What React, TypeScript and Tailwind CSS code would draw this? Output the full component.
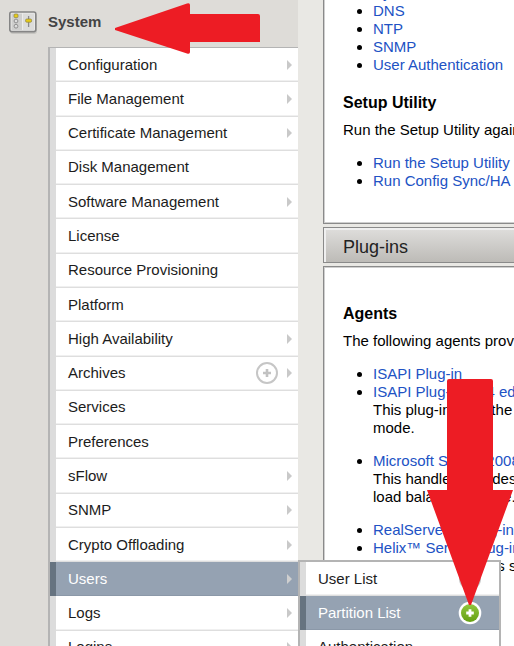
import type { ReactNode } from "react";

type Item = { label: string; arrow?: boolean; add?: boolean; active?: boolean };

const menu: Item[] = [
  { label: "Configuration", arrow: true },
  { label: "File Management", arrow: true },
  { label: "Certificate Management", arrow: true },
  { label: "Disk Management" },
  { label: "Software Management", arrow: true },
  { label: "License" },
  { label: "Resource Provisioning" },
  { label: "Platform" },
  { label: "High Availability", arrow: true },
  { label: "Archives", arrow: true, add: true },
  { label: "Services" },
  { label: "Preferences" },
  { label: "sFlow", arrow: true },
  { label: "SNMP", arrow: true },
  { label: "Crypto Offloading", arrow: true },
  { label: "Users", arrow: true, active: true },
  { label: "Logs", arrow: true },
  { label: "Logins", arrow: true },
];

const submenu: Item[] = [
  { label: "User List", add: true },
  { label: "Partition List", add: true, active: true },
  { label: "Authentication" },
];

function AddButton({ label, active }: { label: string; active?: boolean }) {
  return (
    <button type="button" aria-label={`Add to ${label}`} className="size-6 shrink-0">
      <svg viewBox="0 0 24 24" className="size-6">
        <defs>
          <linearGradient id="green" x1="0" y1="0" x2="0" y2="1">
            <stop offset="0" stopColor="#91c63f" />
            <stop offset="1" stopColor="#65a010" />
          </linearGradient>
        </defs>
        {active ? (
          <>
            <circle cx="12" cy="12" r="11.3" fill="#fff" />
            <circle cx="12" cy="12" r="9" fill="url(#green)" />
            <path d="M12 8.2v7.6M8.2 12h7.6" stroke="#fff" strokeWidth="2.8" />
          </>
        ) : (
          <>
            <circle cx="12" cy="12" r="10" fill="#fff" stroke="#c6c6c6" strokeWidth="2" />
            <path d="M12 8v8M8 12h8" stroke="#c2c2c2" strokeWidth="2.6" />
          </>
        )}
      </svg>
    </button>
  );
}

function MenuRow({ item, nested }: { item: Item; nested?: boolean }) {
  const tone = item.active
    ? "border-l-[#667380] bg-[#95a2b2] text-white shadow-[inset_0_-1px_0_#8b98a8]"
    : "border-l-[#dcdcdc] bg-white text-[#1c1c1c] shadow-[inset_0_-1px_0_#dedede,inset_0_-2px_0_#f0f0f0]";
  return (
    <li className={`flex items-center border-l-6 pb-px pl-3 ${nested ? "pr-[17px]" : "pr-[6px]"} ${tone}`}>
      <a href="#" className="flex-1">{item.label}</a>
      {item.add && <AddButton label={item.label} active={item.active} />}
      {item.arrow && (
        <svg viewBox="0 0 5 10" className={`ml-2 h-[10px] w-[5px] ${item.active ? "text-[#cfcfcf]" : "text-[#c9c9c9]"}`}>
          <path d="M0 0L5 5L0 10Z" fill="currentColor" />
        </svg>
      )}
    </li>
  );
}

function SystemIcon() {
  return (
    <svg viewBox="0 0 30 24" className="h-6 w-[30px]">
      <rect x="2" y="3" width="27" height="21" rx="3" fill="#c6c5c1" />
      <rect x="1.8" y="2" width="26" height="19.6" rx="2" fill="#ececeb" stroke="#858585" strokeWidth="1.6" />
      <rect x="3.5" y="3.6" width="10.5" height="16.4" fill="#cfcfce" />
      <rect x="15" y="3.6" width="11.2" height="16.4" fill="#dcdcdb" />
      <rect x="6" y="4" width="4" height="3.6" rx="1" fill="#e6cc18" stroke="#8a8046" strokeWidth="0.7" />
      <circle cx="8" cy="11" r="1.9" fill="#ddd" stroke="#888" strokeWidth="0.9" />
      <circle cx="8" cy="16.2" r="1.9" fill="#ddd" stroke="#888" strokeWidth="0.9" />
      <path d="M20.6 6v11" stroke="#8a8a8a" strokeWidth="1.3" />
      <rect x="17.6" y="9" width="6" height="3.2" rx="1.2" fill="#e6cc18" stroke="#8a8046" strokeWidth="0.7" />
    </svg>
  );
}

function Link({ children }: { children: ReactNode }) {
  return <a href="#" className="text-[#2152c4]">{children}</a>;
}

const listStyle = "list-disc pl-[30px]";
const panel = "border border-r-0 border-[#8a8a8a] bg-white pl-[19px]";

export default function App() {
  return (
    <div className="relative flex h-screen overflow-hidden bg-[#e9e8e4] font-['Liberation_Sans',Arial,sans-serif] text-[15px] leading-[18px] text-black">
      <nav className="w-[298px] shrink-0 bg-[#dedcd8]">
        <h2 className="flex h-[47px] items-center gap-[10px] pb-[3px] pl-2 font-bold text-[#444]">
          <SystemIcon />
          System
        </h2>
        <ul className="ml-12 grid h-[618px] auto-rows-fr border-t border-l-2 border-[#b4b4b4]">
          {menu.map((item) => <MenuRow key={item.label} item={item} />)}
        </ul>
      </nav>

      <main className="ml-[25px] flex-1 whitespace-nowrap">
        <section className={`${panel} h-[224px] overflow-hidden border-t-0 shadow-[inset_1px_-1px_0_#cfcfcf]`}>
          <ul className={`${listStyle} -mt-4`}>
            <li><Link>System</Link></li>
            <li><Link>DNS</Link></li>
            <li><Link>NTP</Link></li>
            <li><Link>SNMP</Link></li>
            <li><Link>User Authentication</Link></li>
          </ul>
          <h3 className="mt-5 text-base leading-[18px] font-bold">Setup Utility</h3>
          <p className="mt-[9px]">Run the Setup Utility again</p>
          <ul className={`${listStyle} mt-[15px]`}>
            <li><Link>Run the Setup Utility</Link></li>
            <li><Link>Run Config Sync/HA</Link></li>
          </ul>
        </section>

        <h2 className="my-[3px] flex h-9 items-center border border-r-0 border-[#8a8a8a] bg-linear-to-b from-[#dfdedc] to-[#bdbbb7] pt-1 pl-[19px] text-lg text-[#222] shadow-[inset_2px_2px_0_#efefef]">
          Plug-ins
        </h2>

        <section className={`${panel} h-[400px] pt-[38px] shadow-[inset_1px_1px_0_#cfcfcf]`}>
          <h3 className="text-base leading-[18px] font-bold">Agents</h3>
          <p className="mt-[9px]">The following agents provide</p>
          <ul className={`${listStyle} mt-[15px]`}>
            <li><Link>ISAPI Plug-in</Link></li>
            <li><Link>ISAPI Plug-in, x64 edition</Link><br />This plug-in is for the x64<br />mode.</li>
            <li className="mt-[15px]"><Link>Microsoft Server 2008</Link><br />This handler provides desktop<br />load balancing mode.</li>
            <li className="mt-[15px]"><Link>RealServer™ Plug-in</Link></li>
            <li><Link>Helix™ Server Plug-in</Link><br />This plug-in collects statistics</li>
          </ul>
        </section>
      </main>

      <ul className="absolute top-[560px] left-[298px] grid h-[106px] w-[203px] auto-rows-fr border-2 border-[#b4b4b4]">
        {submenu.map((item) => <MenuRow key={item.label} item={item} nested />)}
      </ul>

      <svg aria-hidden="true" viewBox="0 0 146 52" className="absolute top-[3px] left-[115px] h-[52px] w-[146px]">
        <path d="M0 25L72 0.5Q75 -.5 75 2V11H143Q145 11 145 13V39H75V49Q75 51.5 72 50.5L0 27Z" fill="#ed1c24" />
      </svg>
      <svg aria-hidden="true" viewBox="0 0 87 227" className="absolute top-[379px] left-[427px] h-[227px] w-[87px]">
        <path d="M20 2Q20 0 22 0H64Q66 0 66 2V111H86L44 226H42L0 111H20Z" fill="#ed1c24" />
      </svg>
    </div>
  );
}
